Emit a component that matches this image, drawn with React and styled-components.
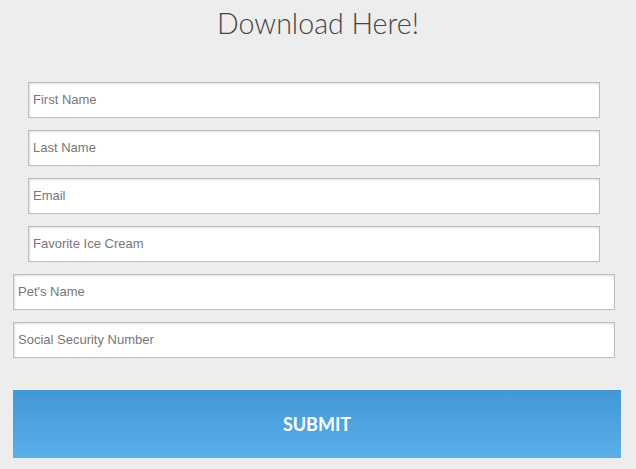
import React from 'react';
import styled, { createGlobalStyle } from 'styled-components';

const GlobalStyle = createGlobalStyle`
  html, body {
    margin: 0;
    padding: 0;
    background: #ededed;
  }
`;

const Page = styled.div`
  width: 636px;
  height: 469px;
  background: #ededed;
  padding: 5px 0 0 13px;
  box-sizing: border-box;
`;

const Title = styled.h1`
  margin: 0 0 41px;
  padding-right: 13px;
  font-family: Lato, sans-serif;
  font-weight: 300;
  font-size: 28.6px;
  line-height: 36px;
  color: #454545;
  text-align: center;
`;

const Form = styled.form`
  display: flex;
  flex-direction: column;
  gap: 12px;
`;

const Field = styled.input`
  box-sizing: border-box;
  width: ${p => (p.$inset ? '572px' : '602px')};
  margin-left: ${p => (p.$inset ? '15px' : '0')};
  height: 36px;
  padding: 0 5px 2px 4px;
  border: 1px solid #bdbdbd;
  box-shadow: inset 1px 1px 2px rgba(0, 0, 0, 0.14);
  background: #fff;
  font-family: Arial, "Liberation Sans", sans-serif;
  font-size: 13px;
  color: #555;
  outline: none;

  &::placeholder {
    color: #777;
  }
`;

const Submit = styled.button`
  margin-top: 20px;
  width: 608px;
  height: 68px;
  border: 0;
  background: linear-gradient(to bottom, #4297d6, #5aaeea);
  color: #fff;
  font-family: Lato, sans-serif;
  font-weight: 700;
  font-size: 18px;
  text-transform: uppercase;
  cursor: pointer;
`;

const fields = [
  { name: 'first', label: 'First Name', inset: true },
  { name: 'last', label: 'Last Name', inset: true },
  { name: 'email', label: 'Email', inset: true },
  { name: 'icecream', label: 'Favorite Ice Cream', inset: true },
  { name: 'pet', label: "Pet's Name" },
  { name: 'ssn', label: 'Social Security Number' },
];

export default function App() {
  return (
    <Page>
      <GlobalStyle />
      <Title>Download Here!</Title>
      <Form onSubmit={e => e.preventDefault()}>
        {fields.map(f => (
          <Field key={f.name} name={f.name} placeholder={f.label} $inset={f.inset} />
        ))}
        <Submit type="submit">Submit</Submit>
      </Form>
    </Page>
  );
}
